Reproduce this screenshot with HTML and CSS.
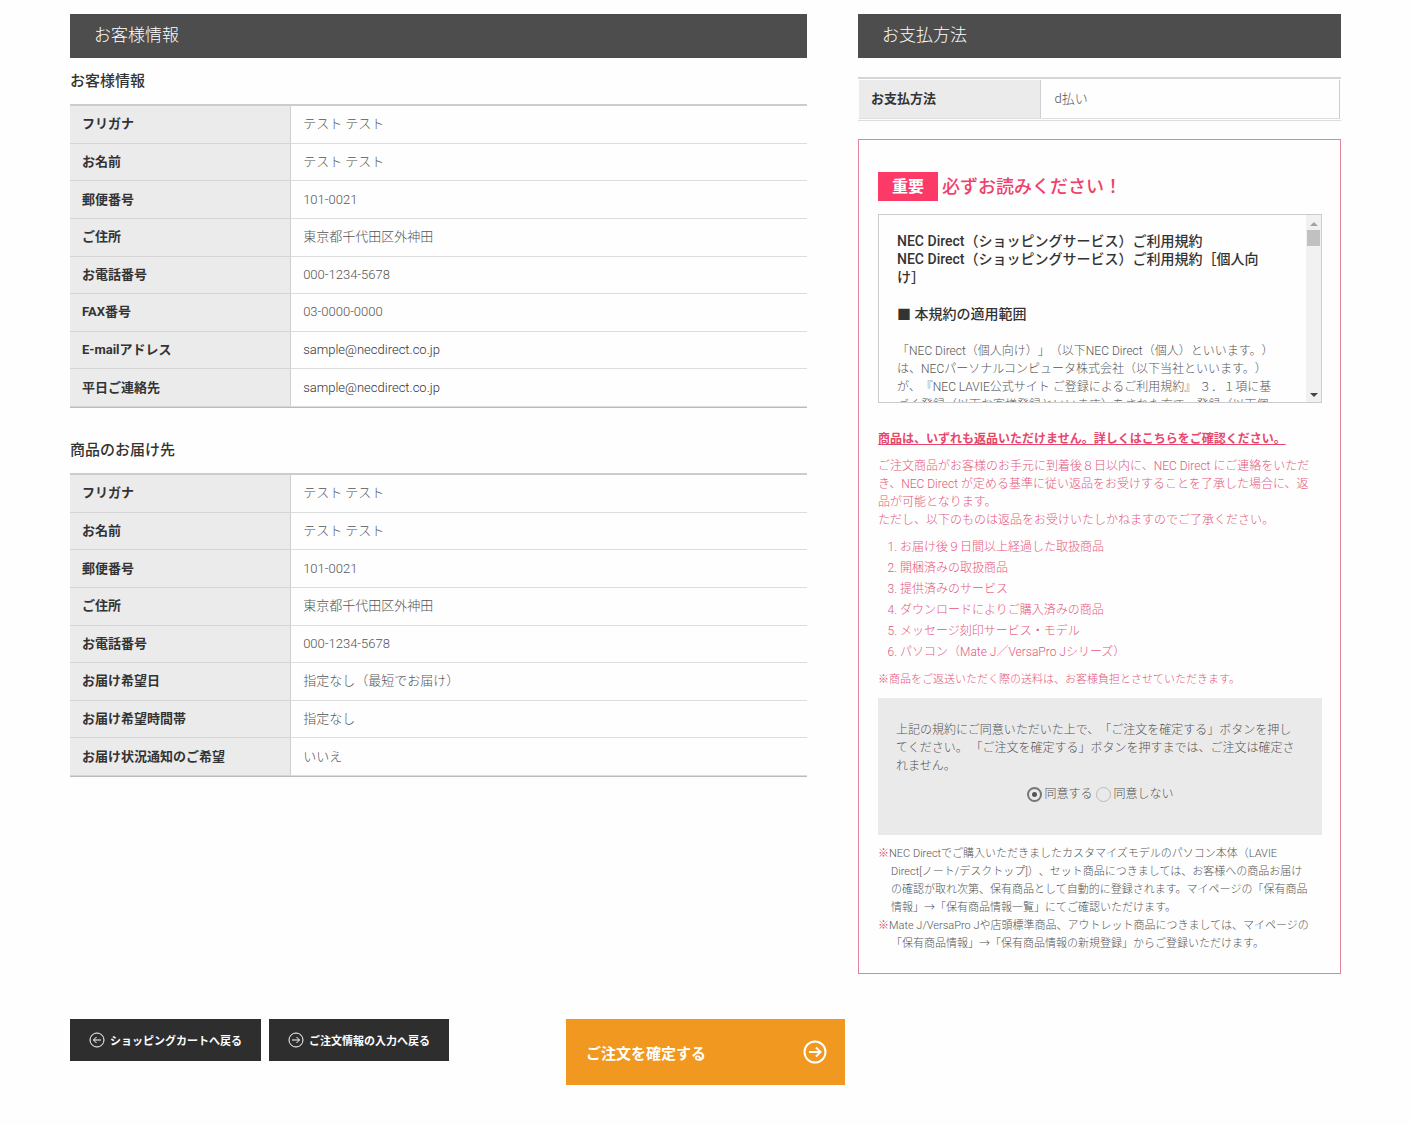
FILE: index.html
```html
<!DOCTYPE html>
<html lang="ja">
<head>
    <meta charset="UTF-8">
    <meta name="viewport" content="width=device-width, initial-scale=1.0">
    <title>ご注文内容の確認</title>
    <link rel="stylesheet" href="styles.css">
</head>
<body>
    <div class="wrap">
        <div class="main">
            <div class="left">
                <h2 class="bar">お客様情報</h2>
                <h3 class="sub">お客様情報</h3>
                <table class="info">
                    <tr><th scope="row">フリガナ</th><td>テスト テスト</td></tr>
                    <tr><th scope="row">お名前</th><td>テスト テスト</td></tr>
                    <tr><th scope="row">郵便番号</th><td>101-0021</td></tr>
                    <tr><th scope="row">ご住所</th><td>東京都千代田区外神田</td></tr>
                    <tr><th scope="row">お電話番号</th><td>000-1234-5678</td></tr>
                    <tr><th scope="row">FAX番号</th><td>03-0000-0000</td></tr>
                    <tr><th scope="row">E-mailアドレス</th><td class="mail">sample@necdirect.co.jp</td></tr>
                    <tr><th scope="row">平日ご連絡先</th><td class="mail">sample@necdirect.co.jp</td></tr>
                </table>
                <h3 class="sub sub_send">商品のお届け先</h3>
                <table class="info">
                    <tr><th scope="row">フリガナ</th><td>テスト テスト</td></tr>
                    <tr><th scope="row">お名前</th><td>テスト テスト</td></tr>
                    <tr><th scope="row">郵便番号</th><td>101-0021</td></tr>
                    <tr><th scope="row">ご住所</th><td>東京都千代田区外神田</td></tr>
                    <tr><th scope="row">お電話番号</th><td>000-1234-5678</td></tr>
                    <tr><th scope="row">お届け希望日</th><td>指定なし（最短でお届け）</td></tr>
                    <tr><th scope="row">お届け希望時間帯</th><td>指定なし</td></tr>
                    <tr><th scope="row">お届け状況通知のご希望</th><td>いいえ</td></tr>
                </table>
            </div>

            <div class="right">
                <h2 class="bar">お支払方法</h2>
                <table class="pay">
                    <tr><th scope="row">お支払方法</th><td>d払い</td></tr>
                </table>

                <div class="notice">
                    <h3 class="notice_title"><span class="tag">重要</span>必ずお読みください！</h3>
                    <div class="terms">
                        <div class="terms_text">
                            <h4>NEC Direct（ショッピングサービス）ご利用規約<br>NEC Direct（ショッピングサービス）ご利用規約［個人向<br>け］</h4>
                            <h4>■ 本規約の適用範囲</h4>
                            <p>「NEC Direct（個人向け）」（以下NEC Direct（個人）といいます。）<br>は、NECパーソナルコンピュータ株式会社（以下当社といいます。）<br>が、『NEC LAVIE公式サイト ご登録によるご利用規約』 ３．１項に基<br>づく登録（以下お客様登録といいます）をされた方で、登録（以下個</p>
                        </div>
                        <div class="scroll" aria-hidden="true">
                            <span class="up"></span>
                            <span class="thumb"></span>
                            <span class="down"></span>
                        </div>
                    </div>

                    <a class="return_link" href="#">商品は、いずれも返品いただけません。詳しくはこちらをご確認ください。</a>
                    <p class="red">ご注文商品がお客様のお手元に到着後８日以内に、NEC Direct にご連絡をいただき、NEC Direct が定める基準に従い返品をお受けすることを了承した場合に、返品が可能となります。<br>ただし、以下のものは返品をお受けいたしかねますのでご了承ください。</p>
                    <ol class="red">
                        <li>お届け後９日間以上経過した取扱商品</li>
                        <li>開梱済みの取扱商品</li>
                        <li>提供済みのサービス</li>
                        <li>ダウンロードによりご購入済みの商品</li>
                        <li>メッセージ刻印サービス・モデル</li>
                        <li>パソコン（Mate J／VersaPro Jシリーズ）</li>
                    </ol>
                    <p class="red small">※商品をご返送いただく際の送料は、お客様負担とさせていただきます。</p>

                    <div class="agree">
                        <p>上記の規約にご同意いただいた上で、「ご注文を確定する」ボタンを押してください。 「ご注文を確定する」ボタンを押すまでは、ご注文は確定されません。</p>
                        <div class="radios">
                            <input type="radio" name="agree" id="agree_yes" checked>
                            <label for="agree_yes">同意する</label>
                            <input type="radio" name="agree" id="agree_no">
                            <label for="agree_no">同意しない</label>
                        </div>
                    </div>

                    <ul class="notes">
                        <li><span>※</span>NEC Directでご購入いただきましたカスタマイズモデルのパソコン本体（LAVIE Direct[ノート/デスクトップ]）、セット商品につきましては、お客様への商品お届けの確認が取れ次第、保有商品として自動的に登録されます。マイページの「保有商品情報」→「保有商品情報一覧」にてご確認いただけます。</li>
                        <li><span>※</span>Mate J/VersaPro Jや店頭標準商品、アウトレット商品につきましては、マイページの「保有商品情報」→「保有商品情報の新規登録」からご登録いただけます。</li>
                    </ul>
                </div>
            </div>
        </div>

        <div class="btns">
            <button type="button" class="btn">
                <svg viewBox="0 0 16 16"><circle cx="8" cy="8" r="7"/><path d="M12 8H4.500M7.500 5L4.500 8l3 3"/></svg>
                ショッピングカートへ戻る
            </button>
            <button type="button" class="btn">
                <svg viewBox="0 0 16 16"><circle cx="8" cy="8" r="7"/><path d="M4 8h7.500M8.500 5l3 3-3 3"/></svg>
                ご注文情報の入力へ戻る
            </button>
            <button type="submit" class="btn_order">
                ご注文を確定する
                <svg viewBox="0 0 24 24"><circle cx="12" cy="12" r="10.500"/><path d="M6 12h11.500M13 7.500l4.500 4.500-4.500 4.500"/></svg>
            </button>
        </div>
    </div>
</body>
</html>
```

FILE: styles.css
```css
* {
    box-sizing: border-box;
}
body, h2, h3, h4, p, ul, ol {
    margin: 0;
    padding: 0;
}
body {
    font-family: Roboto, "Noto Sans CJK JP", sans-serif;
    font-size: 12px;
    font-weight: 300;
    line-height: 18px;
    text-spacing-trim: space-all;
    color: #555;
    background: #fefefe;
}
.wrap {
    padding: 14px 69px 40px 70px;
}
.main {
    display: flex;
    justify-content: space-between;
    align-items: flex-start;
}
.left {
    width: 58%;
}
.right {
    width: 38%;
}

/* 見出し */
.bar {
    padding: 9px 24px 11px;
    font-size: 17px;
    font-weight: 300;
    line-height: 24px;
    color: #fff;
    background: #4d4d4d;
}
.sub {
    padding: 11px 0;
    font-size: 15px;
    font-weight: 500;
    line-height: 24px;
    color: #333;
}
.sub_send {
    padding-top: 30px;
}

/* 情報テーブル */
table {
    width: 100%;
    border-spacing: 0;
    font-size: 13px;
}
th {
    font-weight: 700;
    text-align: left;
    color: #333;
    background: #ebebec;
}
.info {
    height: 304px;
    border-top: 2px solid #ccc;
    border-bottom: 1px solid #bbb;
}
.info th {
    width: 30%;
    padding: 0 12px;
    border-right: 1px solid #d0d0d4;
    border-bottom: 1px solid #d5d5d8;
}
.info td {
    padding: 0 12px;
    border-bottom: 1px solid #ddd;
}
.info .mail {
    color: #333;
}
.pay {
    margin-top: 19px;
    height: 44px;
    border-top: 2px solid #d5d5d8;
    border-bottom: 1px solid #ddd;
    border-spacing: 1px;
}
.pay th {
    width: 38%;
    padding: 0 12px;
    border-right: 1px solid #d0d0d4;
    border-bottom: 1px solid #ddd;
}
.pay td {
    padding: 0 12px;
    border-right: 1px solid #ccc;
    border-bottom: 1px solid #ddd;
}

/* 重要 */
.notice {
    margin-top: 18px;
    padding: 32px 18px 20px 19px;
    border: 1px solid #e0849c;
}
.notice_title {
    display: flex;
    align-items: center;
    gap: 4px;
    font-size: 18px;
    font-weight: 500;
    line-height: 29px;
    color: #f0416a;
}
.tag {
    padding: 0 14px;
    font-size: 16px;
    font-weight: 700;
    color: #fff;
    background: #fb3a68;
}
.terms {
    display: flex;
    height: 189px;
    margin: 13px 0 27px;
    border: 1px solid #ccc;
    overflow: hidden;
}
.terms_text {
    flex: 1;
    padding: 17px 0 0 18px;
    white-space: nowrap;
    overflow: hidden;
}
.terms_text h4 {
    margin-bottom: 19px;
    font-size: 14px;
    font-weight: 500;
    color: #333;
}
.scroll {
    display: flex;
    flex-direction: column;
    align-items: center;
    width: 15px;
    padding: 7px 0 5px;
    background: #f1f1f1;
}
.up {
    border: 4px solid transparent;
    border-top: 0;
    border-bottom-color: #a3a3a3;
}
.thumb {
    width: 13px;
    height: 16px;
    margin-top: 4px;
    background: #c1c1c1;
}
.down {
    margin-top: auto;
    border: 4px solid transparent;
    border-bottom: 0;
    border-top-color: #444;
}
.return_link {
    display: block;
    font-weight: 700;
    color: #e8476c;
}
.red {
    margin-top: 9px;
    padding-right: 4px;
    color: #e4587c;
}
ol.red {
    padding-left: 22px;
    margin-top: 8px;
    line-height: 21px;
}
.small {
    margin-top: 8px;
    font-size: 11px;
}
.agree {
    margin-top: 9px;
    padding: 23px 18px 32px;
    background: #ebeaeb;
}
.agree p {
    padding-right: 6px;
}
.radios {
    display: flex;
    justify-content: center;
    align-items: center;
    gap: 3px;
    margin-top: 10px;
}
.radios input {
    appearance: none;
    width: 15px;
    height: 15px;
    margin: 0;
    border: 1px solid #bbb;
    border-radius: 50%;
}
.radios input:checked {
    border: 2px solid #777;
    background: radial-gradient(circle, #555 2px, transparent 3px);
}
.notes {
    margin-top: 10px;
    padding-right: 11px;
    font-size: 11px;
    list-style: none;
}
.notes li {
    padding-left: 13px;
    text-indent: -13px;
}
.notes span {
    color: #e8476c;
}

/* ボタン */
.btns {
    display: flex;
    align-items: flex-start;
    gap: 8px;
    margin-top: 45px;
}
button {
    display: flex;
    align-items: center;
    border: 0;
    font-family: inherit;
    font-weight: 700;
    color: #fff;
    cursor: pointer;
}
svg {
    fill: none;
    stroke: #fff;
}
.btn {
    gap: 5px;
    height: 42px;
    padding: 0 19px;
    font-size: 11px;
    background: #2e2e2f;
}
.btn svg {
    width: 16px;
    height: 16px;
}
.btn_order {
    justify-content: space-between;
    width: 279px;
    height: 66px;
    margin-left: 109px;
    padding: 0 18px 0 20px;
    font-size: 15px;
    background: #f0981f;
}
.btn_order svg {
    width: 24px;
    height: 24px;
    stroke-width: 2;
}
```
